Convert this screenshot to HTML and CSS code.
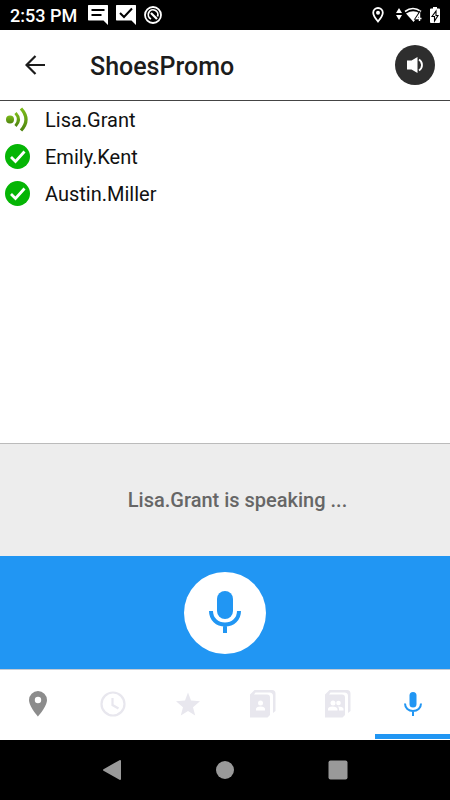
FILE: index.html
```html
<!DOCTYPE html>
<html lang="en">
<head>
  <meta charset="UTF-8">
  <meta name="viewport" content="width=device-width, initial-scale=1">
  <title>ShoesPromo</title>
  <link rel="stylesheet" href="styles.css">
</head>
<body>

  <div class="status-bar">
    <span class="time">2:53 PM</span>
    <div class="notifications">
      <svg width="20" height="20" viewBox="0 0 20 20">
        <path fill="#fff" d="M.5 0h19L20 .5V20l-4.500-4.500H.5L0 15V.5z"/>
        <path stroke="#000" stroke-width="2" d="M3.500 5h13M3.500 10h10"/>
      </svg>
      <svg width="20" height="20" viewBox="0 0 20 20">
        <path fill="#fff" d="M.5 0h19L20 .5V20l-4.500-4.500H.5L0 15V.5z"/>
        <path fill="none" stroke="#000" stroke-width="2" d="M4 8l4 4 8-8.500"/>
      </svg>
      <svg width="20" height="20" viewBox="0 0 20 20" fill="none" stroke="#fff">
        <circle cx="9" cy="10" r="8" stroke-width="1.800"/>
        <path stroke-width="1.800" d="M7 14a4.800 4.800 0 1 1 6.500-2.500"/>
        <path stroke-width="2.200" d="M7 8l6 6"/>
      </svg>
    </div>
    <div class="system">
      <svg width="12" height="16" viewBox="0 0 12 16">
        <path fill="none" stroke="#fff" stroke-width="1.800" d="M6 14.500C3 11 1.200 8.500 1.200 5.800a4.800 4.800 0 0 1 9.600 0C10.800 8.500 9 11 6 14.500z"/>
        <circle cx="6" cy="5.700" r="2" fill="#fff"/>
      </svg>
      <svg class="wifi" width="26" height="16" viewBox="0 0 26 16">
        <path fill="#fff" d="M0 6l3-5 3 5zM0 8h6l-3 5z"/>
        <path fill="none" stroke="#fff" stroke-width="1.600" d="M9 4.500q8-6 16 0"/>
        <path fill="#fff" d="M10 6.500q7.500-4.500 14 0L17.500 15z"/>
        <path fill="none" stroke="#000" stroke-width="2.400" d="M23 14V7l-3 4.500h5"/>
        <path fill="none" stroke="#fff" stroke-width="1.400" d="M23.500 14V7l-3 4.500H25.500"/>
      </svg>
      <svg width="10" height="16" viewBox="0 0 10 16">
        <path fill="#fff" d="M3 0h4v1.500h2q1 0 1 1V15q0 1-1 1H1q-1 0-1-1V2.500q0-1 1-1h2z"/>
        <path fill="none" stroke="#000" stroke-width="1.100" d="M6 4L2 9.500h2.500V14L8 8.500H6z"/>
      </svg>
    </div>
  </div>

  <header class="header">
    <button class="back" aria-label="Back">
      <svg width="20" height="20" viewBox="0 0 20 20">
        <path fill="none" stroke="#1c1c1c" stroke-width="2.200" d="M20 10H2M10.500 1L1.500 10l9 9"/>
      </svg>
    </button>
    <h1 class="title">ShoesPromo</h1>
    <button class="speaker" aria-label="Speaker">
      <svg width="16" height="16" viewBox="0 0 16 16">
        <path fill="#fff" d="M0 3.500h4.500L10.500 0v16l-6-3.500H0z"/>
        <path fill="none" stroke="#fff" stroke-width="1.800" d="M12 2.500q3 2 3 5.500t-3 5.500"/>
      </svg>
    </button>
  </header>

  <ul class="members">
    <li class="member">
      <svg width="25" height="25" viewBox="0 0 25 25">
        <defs>
          <linearGradient id="green" x1="0" y1="0" x2="0" y2="1">
            <stop offset="0" stop-color="#7cbb1a"/>
            <stop offset="1" stop-color="#4f850f"/>
          </linearGradient>
        </defs>
        <circle cx="5" cy="12.500" r="4" fill="url(#green)"/>
        <path fill="none" stroke="url(#green)" stroke-width="3" d="M10.500 6q6 6.500 0 13"/>
        <path fill="none" stroke="url(#green)" stroke-width="3.200" d="M16 1.500q10 11 0 22"/>
      </svg>
      <span>Lisa.Grant</span>
    </li>
    <li class="member">
      <svg width="25" height="25" viewBox="0 0 25 25">
        <circle cx="12.500" cy="12.500" r="12.500" fill="#05b505"/>
        <path fill="none" stroke="#fff" stroke-width="2.800" d="M6 13l4.500 4.500L19.500 7.500"/>
      </svg>
      <span>Emily.Kent</span>
    </li>
    <li class="member">
      <svg width="25" height="25" viewBox="0 0 25 25">
        <circle cx="12.500" cy="12.500" r="12.500" fill="#05b505"/>
        <path fill="none" stroke="#fff" stroke-width="2.800" d="M6 13l4.500 4.500L19.500 7.500"/>
      </svg>
      <span>Austin.Miller</span>
    </li>
  </ul>

  <div class="speaking">Lisa.Grant is speaking ...</div>

  <div class="talk">
    <button class="talk-button" aria-label="Talk">
      <svg width="32" height="44" viewBox="0 0 32 44">
        <rect x="8" y="0" width="16" height="28" rx="8" fill="#2196f3"/>
        <path fill="none" stroke="#2196f3" stroke-width="4" d="M2 20c0 8 6 13.500 14 13.500S30 28 30 20M16 33v9"/>
      </svg>
    </button>
  </div>

  <nav class="tabs">
    <button class="tab" aria-label="Location">
      <svg width="18" height="26" viewBox="0 0 18 26">
        <path fill="#8c8c8c" fill-rule="evenodd" d="M9 0a9 9 0 0 0-9 9c0 6.500 9 16.500 9 16.500S18 15.500 18 9a9 9 0 0 0-9-9zm0 5.800a3.200 3.200 0 1 1 0 6.400 3.200 3.200 0 0 1 0-6.400z"/>
      </svg>
    </button>
    <button class="tab" aria-label="Recent">
      <svg width="26" height="26" viewBox="0 0 26 26" fill="none" stroke="#e8e7ee" stroke-width="2.200">
        <circle cx="13" cy="13" r="11.500"/>
        <path d="M12.500 7v7l6 3.500"/>
      </svg>
    </button>
    <button class="tab" aria-label="Favorites">
      <svg width="24" height="24" viewBox="0 0 24 24">
        <path fill="#e8e7ee" d="M12 .5l3 8 9 .8-7 6 2.200 8.200L12 19l-7.200 4.500L7 15.300l-7-6L9 8.500z"/>
      </svg>
    </button>
    <button class="tab" aria-label="Contacts">
      <svg width="26" height="28" viewBox="0 0 26 28">
        <path fill="#e8e7ee" d="M0 4.500L4.500 0H22q3.500 0 3.500 3.500V21l-2.500 2V6q0-3.500-3.500-3.500H5.500L4 4.500h13q3 0 3 3V25l-2.500 2.500H0z"/>
        <circle cx="10.500" cy="13" r="2.500" fill="#fff"/>
        <path fill="#fff" d="M6 20.500V19q0-2.500 4.500-2.500T15 19v1.500z"/>
      </svg>
    </button>
    <button class="tab" aria-label="Groups">
      <svg width="26" height="28" viewBox="0 0 26 28">
        <path fill="#e8e7ee" d="M0 4.500L4.500 0H22q3.500 0 3.500 3.500V21l-2.500 2V6q0-3.500-3.500-3.500H5.500L4 4.500h13q3 0 3 3V25l-2.500 2.500H0z"/>
        <circle cx="8" cy="13" r="2.500" fill="#fff"/>
        <circle cx="13.500" cy="13" r="2.300" fill="#fff"/>
        <path fill="#fff" d="M3 20.500V19q0-2.500 4.500-2.500T12.500 19v1.500zM13 16.500q5.500 0 5.500 2.500v1.500H14V19q0-1.500-1-2.500z"/>
      </svg>
    </button>
    <button class="tab active" aria-label="Push to talk">
      <svg width="18" height="24" viewBox="0 0 18 24">
        <rect x="5.500" y="0" width="7" height="15.500" rx="3.500" fill="#2196f3"/>
        <path fill="none" stroke="#2196f3" stroke-width="2" d="M1 11.500c0 4.500 3.500 7.500 8 7.500s8-3 8-7.500M9 19v5"/>
      </svg>
    </button>
  </nav>

  <div class="system-nav">
    <button class="nav-button" aria-label="System back">
      <svg width="20" height="20" viewBox="0 0 20 20">
        <path fill="#999" stroke="#999" stroke-width="2" stroke-linejoin="round" d="M17 1v18L1 10z"/>
      </svg>
    </button>
    <button class="nav-button" aria-label="Home">
      <svg width="20" height="20" viewBox="0 0 20 20">
        <circle cx="10" cy="10" r="9" fill="#999"/>
      </svg>
    </button>
    <button class="nav-button" aria-label="Overview">
      <svg width="20" height="20" viewBox="0 0 20 20">
        <rect x=".5" y=".5" width="19" height="19" rx="2" fill="#999"/>
      </svg>
    </button>
  </div>

</body>
</html>
```
FILE: styles.css
```css
* {
  box-sizing: border-box;
}

body {
  margin: 0;
  min-height: 100vh;
  display: flex;
  flex-direction: column;
  background: #fff;
  font-family: Roboto, sans-serif;
}

svg {
  display: block;
}

button {
  display: flex;
  justify-content: center;
  align-items: center;
  padding: 0;
  border: none;
  background: none;
  cursor: pointer;
}

.status-bar {
  display: flex;
  align-items: center;
  height: 30px;
  padding: 0 10px;
  background: #000;
  color: #fff;
}

.time {
  font-size: 18px;
  font-weight: 500;
}

.notifications {
  display: flex;
  gap: 8px;
  margin-left: 11px;
}

.system {
  display: flex;
  align-items: center;
  gap: 8px;
  margin-left: auto;
}

.wifi {
  margin-left: 4px;
}

.header {
  display: flex;
  align-items: center;
  height: 71px;
  padding: 0 15px 0 20px;
  border-bottom: 1px solid #444;
}

.back {
  width: 30px;
  height: 40px;
}

.title {
  flex: 1;
  margin: 0 0 0 40px;
  padding-top: 2px;
  color: #1c1c1c;
  font-size: 25px;
  font-weight: 500;
}

.speaker {
  width: 40px;
  height: 40px;
  border-radius: 50%;
  background: #2e2e2e;
}

.members {
  flex: 1;
  margin: 0;
  padding: 0 5px;
  list-style: none;
}

.member {
  display: flex;
  align-items: center;
  gap: 15px;
  height: 37px;
  color: #111;
  font-size: 20px;
}

.speaking {
  display: flex;
  justify-content: center;
  align-items: center;
  height: 113px;
  padding-left: 25px;
  border-top: 1px solid #bbb;
  background: #ededed;
  color: #666;
  font-size: 20px;
  font-weight: 500;
}

.talk {
  display: flex;
  justify-content: center;
  align-items: center;
  height: 113px;
  background: #2196f3;
}

.talk-button {
  width: 82px;
  height: 82px;
  border-radius: 50%;
  background: #fff;
}

.tabs {
  display: flex;
  height: 71px;
  padding-bottom: 1px;
  border-top: 1px solid #c5cbd3;
}

.tab {
  flex: 1;
  padding-top: 4px;
  border-bottom: 5px solid transparent;
}

.active {
  border-bottom-color: #2196f3;
}

.system-nav {
  display: flex;
  justify-content: center;
  height: 60px;
  background: #000;
}

.nav-button {
  width: 25%;
}
```
